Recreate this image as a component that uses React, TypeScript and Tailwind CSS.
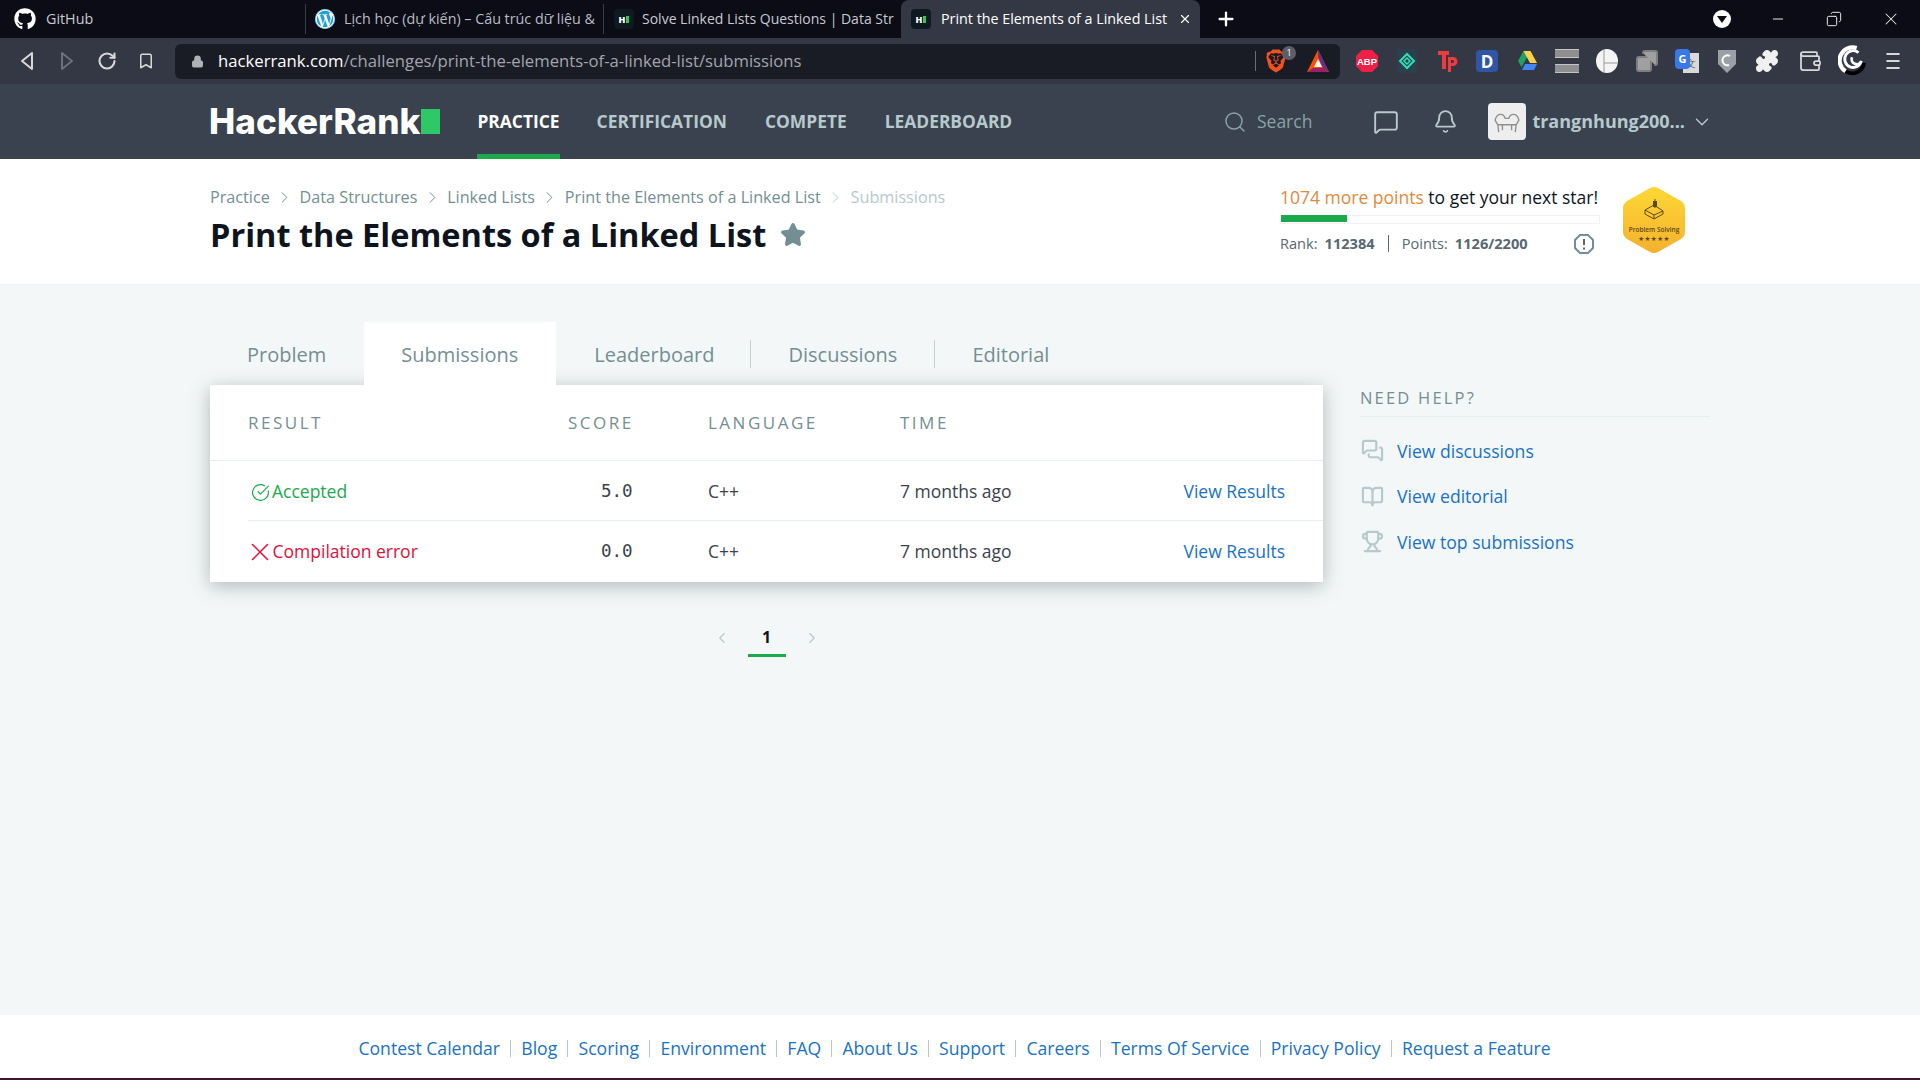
import {
  Bell,
  BookOpen,
  ChevronDown,
  ChevronLeft,
  ChevronRight,
  CircleCheckBig,
  Copy,
  Lock,
  Menu,
  MessageSquare,
  Minus,
  Plus,
  Puzzle,
  RotateCw,
  Search,
  Star,
  Trophy,
  Wallet,
  X,
  Bookmark,
  MessagesSquare,
} from 'lucide-react';
import { FaGithub, FaWordpress, FaBrave } from 'react-icons/fa6';

const navLinks = ['CERTIFICATION', 'COMPETE', 'LEADERBOARD'];
const crumbs = ['Practice', 'Data Structures', 'Linked Lists', 'Print the Elements of a Linked List'];
const footerLinks = [
  'Contest Calendar',
  'Blog',
  'Scoring',
  'Environment',
  'FAQ',
  'About Us',
  'Support',
  'Careers',
  'Terms Of Service',
  'Privacy Policy',
  'Request a Feature',
];

function HrFavicon() {
  return (
    <span className="flex items-center justify-center gap-px w-5 h-5 bg-[#0f1a20] rounded-sm shrink-0">
      <span className="text-[9px] leading-none font-extrabold text-white">H</span>
      <span className="w-[3px] h-[7px] bg-[#2ec866]" />
    </span>
  );
}

function Triangle({ className }: { className?: string }) {
  return (
    <svg viewBox="0 0 24 24" className={className}>
      <path d="M12 1 23 23H1z" fill="#ff5000" />
      <path d="M12 1 23 23 17 19 12 8z" fill="#662d91" />
      <path d="M1 23 7 19H17L23 23z" fill="#9e1f63" />
      <path d="M12 10 16 18H8z" fill="#fff" />
    </svg>
  );
}

function Extensions() {
  return (
    <div className="flex items-center gap-4 ml-[15px]">
      <svg viewBox="0 0 24 24" className="w-6 h-6">
        <polygon points="7,1 17,1 23,7 23,17 17,23 7,23 1,17 1,7" fill="#ef1f48" />
        <text x="12" y="15.5" textAnchor="middle" fontSize="9.5" fontWeight="700" fill="#fff" fontFamily="Liberation Sans, sans-serif">
          ABP
        </text>
      </svg>
      <svg viewBox="0 0 24 24" className="w-6 h-6">
        <rect x="2" y="0" width="20" height="24" rx="2" fill="#2b3f4f" />
        <path d="M12 5 19 12 12 19 5 12z" fill="none" stroke="#2fe0b5" strokeWidth="2" />
        <path d="M12 9 15 12 12 15 9 12z" fill="none" stroke="#2fe0b5" strokeWidth="1.5" />
      </svg>
      <svg viewBox="0 0 24 24" className="w-6 h-6">
        <path d="M3 2H14V6H11V20H7V6H3z" fill="#ef3b3b" />
        <path d="M13 8H18A4 4 0 0 1 18 17H16V23H13zM16 11V14H17.500A1.500 1.500 0 0 0 17.500 11z" fill="#ef3b3b" />
      </svg>
      <span className="flex items-center justify-center w-[22px] h-[22px] mx-px bg-[#2f55a4] rounded-sm text-white text-[17px] font-bold leading-none">D</span>
      <svg viewBox="0 0 24 24" className="w-6 h-6">
        <path d="M8.500 2H15.500L10 12 6.500 18 3 12z" fill="#1fa463" />
        <path d="M15.500 2 22 14H15L8.500 2z" fill="#ffd04b" />
        <path d="M7 21 10 15H22L19 21z" fill="#4285f4" />
      </svg>
      <div className="flex flex-col gap-[6px] w-6">
        <span className="h-[9px] bg-[#8f8f8f] border-y border-[#c4c4c4]" />
        <span className="h-[9px] bg-[#8f8f8f] border-y border-[#c4c4c4]" />
      </div>
      <svg viewBox="0 0 24 24" className="w-6 h-6">
        <ellipse cx="12" cy="12" rx="11" ry="12" fill="#f4f4f4" />
        <path d="M9 0V24M9 14H23" stroke="#999" strokeWidth="1" />
      </svg>
      <Copy className="w-6 h-6 text-[#7f7f7f] fill-[#a0a0a0] -scale-x-100" strokeWidth={2} />
      <div className="relative w-6 h-6">
        <span className="absolute right-0 bottom-0 w-4 h-5 bg-[#d9d9d9] text-[10px] leading-5 text-center text-[#555]">文</span>
        <span className="absolute left-0 top-0 w-[15px] h-5 bg-[#3b78e7] rounded-sm text-[11px] leading-5 text-center font-bold text-white">G</span>
      </div>
      <svg viewBox="0 0 24 24" className="w-6 h-6">
        <path d="M3 1H21V15L12 24 3 15z" fill="#9aa0a6" />
        <path d="M15 7A5 5 0 1 0 14 16" fill="none" stroke="#fff" strokeWidth="2" />
      </svg>
      <Puzzle className="w-6 h-6 text-[#f0f0f0] fill-[#f0f0f0]" />
      <Wallet className="w-6 h-6 ml-[3px] text-[#d8d8d8]" strokeWidth={1.75} />
      <svg viewBox="0 0 30 34" className="w-7 h-8 ml-0 -mr-px">
        <path d="M8 28A13 13 0 0 0 28 19" fill="none" stroke="#000" strokeWidth="4" />
        <path d="M20 3A14 14 0 0 0 8 28" fill="none" stroke="#fff" strokeWidth="4.500" />
        <path d="M22 8A9 9 0 1 0 25 17 5 5 0 1 1 15 13" fill="none" stroke="#fff" strokeWidth="3" />
      </svg>
      <Menu className="w-6 h-6 text-[#d8d8d8] scale-x-75" strokeWidth={2} />
    </div>
  );
}

function ChromeBar() {
  return (
    <div className="font-['Open_Sans',sans-serif]">
      {/* tab strip */}
      <div className="flex items-center h-[38px] bg-[#0b0c16] text-[14.300px]">
        <div className="flex items-center w-[305px] h-full pl-[14px] gap-[10px] text-[#c8cad0]">
          <FaGithub className="w-[22px] h-[22px] text-white" />
          <span className="-mt-px">GitHub</span>
        </div>
        <div className="flex items-center w-[298px] h-[30px] pl-[9px] pr-2 gap-[9px] border-l border-[#3a3d48] text-[#b9bcc4]">
          <FaWordpress className="w-5 h-5 text-[#21a0d8] bg-white rounded-full shrink-0" />
          <span className="-mt-px whitespace-nowrap">Lịch học (dự kiến) – Cấu trúc dữ liệu &amp;</span>
        </div>
        <div className="flex items-center w-[298px] h-[30px] pl-[10px] pr-2 gap-[8px] border-l border-[#3a3d48] text-[#c8cad0] text-[14px]">
          <HrFavicon />
          <span className="-mt-px whitespace-nowrap">Solve Linked Lists Questions | Data Str</span>
        </div>
        <div className="flex items-center w-[299px] h-full pl-[10px] pr-[8px] gap-[10px] bg-[#343845] rounded-t-lg text-white">
          <HrFavicon />
          <span className="-mt-px whitespace-nowrap flex-1">Print the Elements of a Linked List</span>
          <X className="w-[14px] h-[14px] shrink-0" />
        </div>
        <Plus className="w-[22px] h-[22px] text-white ml-[15px]" strokeWidth={2.5} />
        <span className="flex items-center justify-center w-[18px] h-[18px] ml-auto rounded-full bg-white">
          <span className="w-0 h-0 border-x-[5px] border-x-transparent border-t-[7px] border-t-[#0b0c16]" />
        </span>
        <div className="flex items-center ml-[39px] mr-[19px] text-[#e8e8e8]">
          <Minus className="w-[16px] h-[16px] mr-[40px]" strokeWidth={1.5} />
          <Copy className="w-[16px] h-[16px] mr-[39px] -scale-x-100" strokeWidth={1.5} />
          <X className="w-[20px] h-[20px]" strokeWidth={1.25} />
        </div>
      </div>
      {/* address bar */}
      <div className="flex items-center h-[46px] bg-[#343845] pl-[20px]">
        <div className="flex items-center w-[155px] text-[#d8d8d8]">
          <svg viewBox="0 0 14 20" className="w-[14px] h-[20px]" fill="none" stroke="currentColor" strokeWidth="2" strokeLinejoin="round">
            <path d="M12 2 2 10 12 18z" />
          </svg>
          <svg viewBox="0 0 14 20" className="w-[14px] h-[20px] ml-[26px] text-[#6d707a]" fill="none" stroke="currentColor" strokeWidth="2" strokeLinejoin="round">
            <path d="M2 2 12 10 2 18z" />
          </svg>
          <RotateCw className="w-[20px] h-[20px] ml-[23px]" strokeWidth={2.5} />
          <Bookmark className="w-[18px] h-[20px] ml-[20px]" strokeWidth={2} />
        </div>
        <div className="flex items-center w-[1165px] h-[35px] bg-[#1a1c25] rounded-md pl-[16px] pr-[10px]">
          <Lock className="w-[13px] h-[13px] text-[#b0b2b8] fill-[#b0b2b8] mr-[14px]" />
          <span className="text-[16.700px] text-white">hackerrank.com</span>
          <span className="text-[16.700px] text-[#a2a5ad]">/challenges/print-the-elements-of-a-linked-list/submissions</span>
          <span className="ml-auto w-px h-[20px] bg-[#6a6d75]" />
          <div className="relative ml-[10px] mr-[20px]">
            <FaBrave className="w-[20px] h-[24px] text-[#f1511d]" />
            <span className="absolute -top-[3px] -right-[10px] w-[14px] h-[14px] rounded-full bg-[#5c5f6b] text-[9px] leading-[14px] text-center text-white">1</span>
          </div>
          <Triangle className="w-[24px] h-[24px]" />
        </div>
        <Extensions />
      </div>
    </div>
  );
}

function SiteNav() {
  return (
    <nav className="flex items-center h-[75px] bg-[#39424e] pl-[209px] pr-[207px]">
      <div className="flex items-center mr-[37px]">
        <span className="text-[35px] leading-none font-extrabold tracking-[0.1px] text-white font-['Inter',sans-serif]">HackerRank</span>
        <span className="w-[19px] h-[25px] ml-px bg-[#2ec866]" />
      </div>
      <a className="flex items-center h-full text-[17.400px] font-bold text-white border-b-[5px] border-[#1ba94c] pt-[5px]">PRACTICE</a>
      <div className="flex items-center gap-[38px] ml-[37px] text-[17.400px] font-bold text-[#b7c9cc]">
        {navLinks.map((link) => (
          <a key={link}>{link}</a>
        ))}
      </div>
      <div className="flex items-center ml-auto text-[#8aa2a6]">
        <Search className="w-[24px] h-[24px]" strokeWidth={1.5} />
        <span className="ml-[10px] text-[17.500px]">Search</span>
      </div>
      <MessageSquare className="w-[26px] h-[26px] ml-[61px] text-[#b7c9cc]" strokeWidth={1.75} />
      <Bell className="w-[25px] h-[25px] ml-[34px] text-[#b7c9cc]" strokeWidth={1.75} />
      <span className="flex items-center justify-center w-[38px] h-[37px] ml-[30px] rounded-[4px] bg-[#eeeeee]">
        <svg viewBox="0 0 32 24" className="w-[30px] h-[22px] text-[#8f8f8f]" fill="none" stroke="currentColor" strokeWidth="1.5">
          <path d="M3 10C5 2 12 2 14 8H18C20 2 27 2 29 10L26 15H6zM6 15 7 23M26 15 25 23M11 15 11 21M21 15 21 21" />
        </svg>
      </span>
      <span className="ml-[6px] text-[18px] font-bold text-[#b7c9cc]">trangnhung200...</span>
      <ChevronDown className="w-[22px] h-[22px] ml-[6px] text-[#b7c9cc]" strokeWidth={1.5} />
    </nav>
  );
}

function HexBadge() {
  return (
    <svg viewBox="0 0 64 68" className="w-[64px] h-[68px] ml-[22px]">
      <defs>
        <linearGradient id="hex" x1="0" y1="0" x2="0" y2="1">
          <stop offset="0" stopColor="#fdd835" />
          <stop offset="1" stopColor="#f4b02e" />
        </linearGradient>
      </defs>
      <path d="M28 2Q32 0 36 2L59 15Q63 18 63 22V46Q63 50 59 53L36 66Q32 68 28 66L5 53Q1 50 1 46V22Q1 18 5 15Z" fill="url(#hex)" />
      <path d="M23 24 32 19 41 25 41 28 32 33 23 28z M23 24 32 29 41 25 M32 29V33 M33 13V22" fill="none" stroke="#5a4a1a" strokeWidth="1" />
      <rect x="31" y="15" width="4" height="6" fill="#5a4a1a" />
      <text x="32" y="46" textAnchor="middle" fontSize="6.500" fontWeight="600" fill="#5a4a1a" fontFamily="Open Sans, sans-serif">
        Problem Solving
      </text>
      <text x="32" y="55" textAnchor="middle" fontSize="6.500" fill="#5a4a1a" letterSpacing="0.5" fontFamily="DejaVu Sans, sans-serif">
        ★★★★★
      </text>
    </svg>
  );
}

function PageHeader() {
  return (
    <header className="flex h-[126px] bg-white pl-[210px] pr-[234px] border-b border-[#eef1f2]">
      <div className="flex-1">
        <div className="flex items-center h-[24px] mt-[26px] text-[16.200px] text-[#738f93]">
          {crumbs.map((crumb, i) => (
            <span key={crumb} className="flex items-center">
              {crumb}
              <ChevronRight
                className={`w-[19px] h-[19px] mx-[5.400px] ${i === crumbs.length - 1 ? 'text-[#b7c9cc]' : 'text-[#738f93]'}`}
                strokeWidth={1.25}
              />
            </span>
          ))}
          <span className="text-[#b7c9cc]">Submissions</span>
        </div>
        <div className="flex items-center mt-[5px]">
          <h1 className="text-[32.500px] leading-[42px] font-bold text-[#0e141e]">Print the Elements of a Linked List</h1>
          <Star className="w-[26px] h-[26px] ml-[14px] text-[#738f93] fill-[#738f93]" />
        </div>
      </div>
      <div className="w-[320px] pt-[25px]">
        <p className="text-[17.500px] leading-[26px] text-[#0e141e] whitespace-nowrap">
          <span className="text-[#e08a3c]">1074 more points</span> to get your next star!
        </p>
        <div className="h-[9px] mt-[5px] border border-[#f0f2f3]">
          <div className="w-[66px] h-full bg-[#1ba94c] -my-px" />
        </div>
        <div className="flex items-center mt-[9px] text-[14.600px] text-[#576871]">
          <span>Rank:</span>
          <span className="ml-[7px] font-bold">112384</span>
          <span className="w-px h-[17px] mx-[13px] bg-[#576871]" />
          <span>Points:</span>
          <span className="ml-[7px] font-bold">1126/2200</span>
          <svg viewBox="0 0 20 20" className="w-[20px] h-[20px] ml-auto mr-[6px]">
            <polygon points="6,1 14,1 19,6 19,14 14,19 6,19 1,14 1,6" fill="none" stroke="#738f93" strokeWidth="2" />
            <path d="M10 5V11M10 13.500V15.500" stroke="#576871" strokeWidth="2" />
          </svg>
        </div>
      </div>
      <div className="pt-[27px]">
        <HexBadge />
      </div>
    </header>
  );
}

function ProblemTabs() {
  return (
    <div className="flex items-center h-[63px] text-[20px] text-[#738f93]">
      <a className="pl-[37px] pr-[38px] pt-[2px]">Problem</a>
      <a className="flex items-center h-full pl-[37px] pr-[38px] pt-[2px] bg-white">Submissions</a>
      <a className="pl-[38px] pr-[36px] pt-[2px] border-r border-[#c2d0d3] leading-[26px]">Leaderboard</a>
      <a className="px-[37px] pt-[2px] border-r border-[#c2d0d3] leading-[26px]">Discussions</a>
      <a className="px-[37px] pt-[2px]">Editorial</a>
    </div>
  );
}

function SubmissionRow({ ok, result, score, last }: { ok: boolean; result: string; score: string; last?: boolean }) {
  return (
    <div className={`grid grid-cols-[320px_140px_192px_1fr_auto] items-center ml-[38px] pr-[38px] text-[17.500px] ${last ? 'h-[61px] pb-[1px]' : 'h-[60px] pt-[1px] border-b border-[#e7eef0]'}`}>
      <span className={`flex items-center ${ok ? 'text-[#1ba94c]' : 'text-[#e0103a]'}`}>
        {ok ? (
          <CircleCheckBig className="w-[19px] h-[19px] ml-[3px] mr-[2px] mt-[2px]" strokeWidth={1.5} />
        ) : (
          <X className="w-[30px] h-[30px] -ml-[3.500px] -mr-[2px] -my-1 mt-[-2px]" strokeWidth={1.25} />
        )}
        {result}
      </span>
      <span className="pl-[33px] text-[17.500px] text-[#39424e] font-['DejaVu_Sans_Mono',monospace]">{score}</span>
      <span className="text-[#39424e]">C++</span>
      <span className="text-[#39424e]">7 months ago</span>
      <a className="text-[#1a72c4]">View Results</a>
    </div>
  );
}

function SubmissionsCard() {
  return (
    <div className="bg-white shadow-[0_4px_18px_rgba(57,66,78,0.35)]">
      <div className="grid grid-cols-[320px_140px_192px_1fr] items-center h-[76px] pl-[38px] border-b border-[#e7eef0] text-[17px] tracking-[2.500px] text-[#738f93]">
        <span>RESULT</span>
        <span>SCORE</span>
        <span>LANGUAGE</span>
        <span>TIME</span>
      </div>
      <SubmissionRow ok result="Accepted" score="5.0" />
      <SubmissionRow ok={false} result="Compilation error" score="0.0" last />
    </div>
  );
}

function Pagination() {
  return (
    <div className="flex items-center justify-center mt-[39px] text-[#b7c9cc]">
      <ChevronLeft className="w-[18px] h-[18px] -mt-[3px]" strokeWidth={1.5} />
      <span className="w-[38px] h-[36px] mx-[17px] border-b-[3px] border-[#1ba94c] text-center text-[16px] leading-[32px] font-bold text-[#0e141e]">1</span>
      <ChevronRight className="w-[18px] h-[18px] -mt-[3px]" strokeWidth={1.5} />
    </div>
  );
}

function HelpSidebar() {
  const items = [
    { icon: MessagesSquare, label: 'View discussions' },
    { icon: BookOpen, label: 'View editorial' },
    { icon: Trophy, label: 'View top submissions' },
  ];
  return (
    <aside className="w-[350px] ml-[37px] mt-[101px]">
      <div className="h-[31px] border-b border-[#e7eef0] text-[16.500px] leading-[24px] tracking-[2.200px] text-[#738f93]">NEED HELP?</div>
      <ul className="mt-[11px]">
        {items.map((item) => {
          const Icon = item.icon;
          return (
            <li key={item.label} className="flex items-center h-[45.500px] text-[17.600px] text-[#1a72c4]">
              <Icon className="w-[23px] h-[23px] ml-px mr-[13px] text-[#b7c9cc]" strokeWidth={2.25} />
              {item.label}
            </li>
          );
        })}
      </ul>
    </aside>
  );
}

function SiteFooter() {
  return (
    <footer className="flex items-center justify-center h-[63px] bg-white text-[17.600px] text-[#1a72c4] pt-[4px] pr-[11px]">
      {footerLinks.map((link, i) => (
        <span key={link} className="flex items-center">
          {i > 0 && <span className="w-px h-[17px] mx-[10.150px] bg-[#b7c9cc]" />}
          <a>{link}</a>
        </span>
      ))}
    </footer>
  );
}

export default function App() {
  return (
    <div className="flex flex-col h-[1080px] overflow-hidden bg-[#f3f7f7] font-['Open_Sans',sans-serif]">
      <ChromeBar />
      <SiteNav />
      <PageHeader />
      <main className="flex flex-1 pl-[210px]">
        <div className="w-[1113px] pt-[37px]">
          <ProblemTabs />
          <SubmissionsCard />
          <Pagination />
        </div>
        <HelpSidebar />
      </main>
      <SiteFooter />
      <div className="h-[2px] bg-[#3d1530]" />
    </div>
  );
}
